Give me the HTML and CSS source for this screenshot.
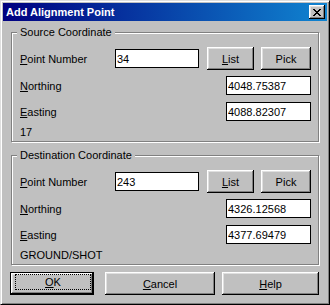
FILE: index.html
```html
<!DOCTYPE html>
<html>
<head>
    <title>Add Alignment Point</title>
    <link rel="stylesheet" href="styles.css">
</head>
<body>
    <div class="window">
        <div class="titlebar">
            <span class="title">Add Alignment Point</span>
            <button class="close-btn">
                <svg width="8" height="7" viewBox="0 0 8 7" shape-rendering="crispEdges">
                    <path fill="#000" d="M0 0h2v1H0z M6 0h2v1H6z M1 1h2v1H1z M5 1h2v1H5z M2 2h4v1H2z M3 3h2v1H3z M2 4h4v1H2z M1 5h2v1H1z M5 5h2v1H5z M0 6h2v1H0z M6 6h2v1H6z"/>
                </svg>
            </button>
        </div>

        <!-- Source Coordinate -->
        <div class="group">
            <div class="group-title">Source Coordinate</div>
            <div class="row row-point">
                <span class="label"><u>P</u>oint Number</span>
                <input type="text" class="field field-point" value="34">
                <button class="btn btn-list"><u>L</u>ist</button>
                <button class="btn btn-pick">Pick</button>
            </div>
            <div class="row row-north">
                <span class="label"><u>N</u>orthing</span>
                <input type="text" class="field field-coord" value="4048.75387">
            </div>
            <div class="row row-east">
                <span class="label"><u>E</u>asting</span>
                <input type="text" class="field field-coord" value="4088.82307">
            </div>
            <div class="row row-code">17</div>
        </div>

        <!-- Destination Coordinate -->
        <div class="group group-dest">
            <div class="group-title">Destination Coordinate</div>
            <div class="row row-point">
                <span class="label"><u>P</u>oint Number</span>
                <input type="text" class="field field-point" value="243">
                <button class="btn btn-list"><u>L</u>ist</button>
                <button class="btn btn-pick">Pick</button>
            </div>
            <div class="row row-north">
                <span class="label"><u>N</u>orthing</span>
                <input type="text" class="field field-coord" value="4326.12568">
            </div>
            <div class="row row-east">
                <span class="label"><u>E</u>asting</span>
                <input type="text" class="field field-coord" value="4377.69479">
            </div>
            <div class="row row-code">GROUND/SHOT</div>
        </div>

        <div class="actions">
            <button class="btn btn-ok"><span class="focus"><u>O</u>K</span></button>
            <button class="btn btn-cancel"><u>C</u>ancel</button>
            <button class="btn btn-help"><u>H</u>elp</button>
        </div>
    </div>
</body>
</html>
```

FILE: styles.css
```css
body {
    margin: 0;
    background-color: #c0c0c0;
}

.window {
    width: 330px;
    height: 305px;
    box-sizing: border-box;
    display: flex;
    flex-direction: column;
    padding: 2px;
    background-color: #c0c0c0;
    border: 1px solid;
    border-color: #dfdfdf #000 #000 #dfdfdf;
    box-shadow: inset 1px 1px #fff, inset -1px -1px #808080;
    font-family: "Liberation Sans", Arial, sans-serif;
    font-size: 11px;
    color: #000;
}

/* title bar */
.titlebar {
    height: 18px;
    display: flex;
    align-items: center;
    padding: 0 2px 0 3px;
    background: linear-gradient(to right, #000080, #1084d0);
    color: #fff;
    font-weight: bold;
}

.close-btn {
    margin-left: auto;
    width: 16px;
    height: 14px;
    padding: 0;
    border: none;
    display: flex;
    align-items: center;
    justify-content: center;
    background-color: #c0c0c0;
    box-shadow: inset -1px -1px #000, inset 1px 1px #fff, inset -2px -2px #808080, inset 2px 2px #dfdfdf;
}

/* group boxes */
.group {
    margin: 11px 8px 0 8px;
    padding: 0 7px 2px 8px;
    display: flex;
    flex-direction: column;
    border: 1px solid #808080;
    box-shadow: inset 1px 1px #fff, 1px 1px #fff;
}

.group-dest {
    margin-top: 13px;
}

.group-title {
    align-self: flex-start;
    height: 13px;
    line-height: 13px;
    margin: -7px 0 8px -3px;
    padding: 0 3px;
    background-color: #c0c0c0;
}

.row {
    display: flex;
    align-items: center;
}

.row-point {
    height: 23px;
}

.row-north {
    height: 19px;
    margin-top: 6px;
}

.row-east {
    height: 19px;
    margin-top: 7px;
}

.row-code {
    height: 14px;
    line-height: 14px;
    margin-top: 4px;
}

.label {
    width: 95px;
    flex: none;
}

.field {
    box-sizing: border-box;
    height: 19px;
    margin: 0;
    padding: 0 1px;
    border: 1px solid #000;
    background-color: #fff;
    font-family: inherit;
    font-size: 11px;
    color: #000;
    outline: none;
}

.field-point {
    width: 84px;
}

.field-coord {
    width: 85px;
    margin-left: auto;
}

/* buttons */
.btn {
    box-sizing: border-box;
    height: 23px;
    padding: 0;
    border: none;
    background-color: #c0c0c0;
    box-shadow: inset -1px -1px #000, inset 1px 1px #fff, inset -2px -2px #808080, inset 2px 2px #dfdfdf;
    font-family: inherit;
    font-size: 11px;
    color: #000;
}

.btn-list {
    width: 47px;
    margin-left: 8px;
}

.btn-pick {
    width: 50px;
    margin-left: 7px;
}

.actions {
    display: flex;
    margin: 7px 8px 0 7px;
}

.btn-ok {
    width: 84px;
    border: 1px solid #000;
    display: flex;
    align-items: flex-start;
}

.focus {
    box-sizing: border-box;
    height: 16px;
    width: 76px;
    margin: 1px 0 0 4px;
    display: flex;
    align-items: center;
    justify-content: center;
    border: 1px dotted #000;
}

.btn-cancel {
    width: 110px;
    margin-left: 11px;
}

.btn-help {
    width: 97px;
    margin-left: 7px;
}
```
